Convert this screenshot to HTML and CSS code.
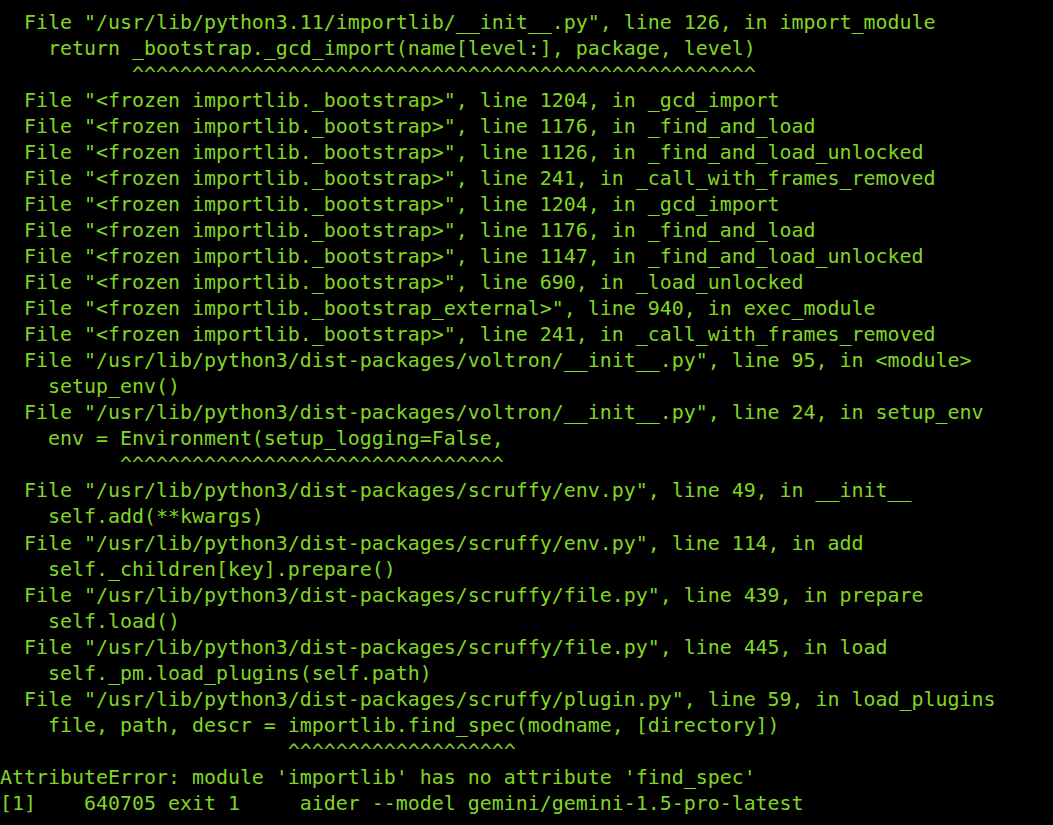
FILE: index.html
```html
<!DOCTYPE html>
<html lang="en">
<head>
<meta charset="utf-8">
<title>Terminal</title>
<link rel="stylesheet" href="styles.css">
</head>
<body>
<pre class="term">  File "/usr/lib/python3.11/importlib/__init__.py", line 126, in import_module
    return _bootstrap._gcd_import(name[level:], package, level)
           ^^^^^^^^^^^^^^^^^^^^^^^^^^^^^^^^^^^^^^^^^^^^^^^^^^^^
  File "&lt;frozen importlib._bootstrap&gt;", line 1204, in _gcd_import
  File "&lt;frozen importlib._bootstrap&gt;", line 1176, in _find_and_load
  File "&lt;frozen importlib._bootstrap&gt;", line 1126, in _find_and_load_unlocked
  File "&lt;frozen importlib._bootstrap&gt;", line 241, in _call_with_frames_removed
  File "&lt;frozen importlib._bootstrap&gt;", line 1204, in _gcd_import
  File "&lt;frozen importlib._bootstrap&gt;", line 1176, in _find_and_load
  File "&lt;frozen importlib._bootstrap&gt;", line 1147, in _find_and_load_unlocked
  File "&lt;frozen importlib._bootstrap&gt;", line 690, in _load_unlocked
  File "&lt;frozen importlib._bootstrap_external&gt;", line 940, in exec_module
  File "&lt;frozen importlib._bootstrap&gt;", line 241, in _call_with_frames_removed
  File "/usr/lib/python3/dist-packages/voltron/__init__.py", line 95, in &lt;module&gt;
    setup_env()
  File "/usr/lib/python3/dist-packages/voltron/__init__.py", line 24, in setup_env
    env = Environment(setup_logging=False,
          ^^^^^^^^^^^^^^^^^^^^^^^^^^^^^^^^
  File "/usr/lib/python3/dist-packages/scruffy/env.py", line 49, in __init__
    self.add(**kwargs)
  File "/usr/lib/python3/dist-packages/scruffy/env.py", line 114, in add
    self._children[key].prepare()
  File "/usr/lib/python3/dist-packages/scruffy/file.py", line 439, in prepare
    self.load()
  File "/usr/lib/python3/dist-packages/scruffy/file.py", line 445, in load
    self._pm.load_plugins(self.path)
  File "/usr/lib/python3/dist-packages/scruffy/plugin.py", line 59, in load_plugins
    file, path, descr = importlib.find_spec(modname, [directory])
                        ^^^^^^^^^^^^^^^^^^^
AttributeError: module 'importlib' has no attribute 'find_spec'
[1]    640705 exit 1     aider --model gemini/gemini-1.5-pro-latest</pre>
</body>
</html>
```

FILE: styles.css
```css
html, body {
  margin: 0;
  padding: 0;
  background: #000000;
  height: 100%;
  overflow: hidden;
}

.term {
  margin: 0;
  padding: 9.6px 0 0 0;
  font-family: "DejaVu Sans Mono", "Liberation Mono", monospace;
  font-size: 19.93px;
  line-height: 26.05px;
  color: #82d624;
  white-space: pre;
}
```
